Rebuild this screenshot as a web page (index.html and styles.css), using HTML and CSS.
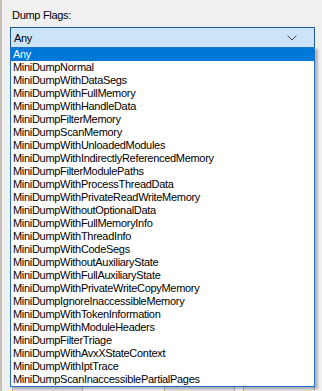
FILE: index.html
```html
<!DOCTYPE html>
<html>
<head>
<link rel="stylesheet" href="styles.css">
</head>
<body>

<div class="dialog">
  <div class="label">Dump Flags:</div>
  <div class="combo">
    <span class="combo-text">Any</span>
    <svg class="chevron" width="10" height="6" viewBox="0 0 10 6">
      <path d="M0.5 0.5 L5 5 L9.5 0.5" fill="none" stroke="#444" stroke-width="1"/>
    </svg>
  </div>

  <div class="hidden-area"></div>

  <div class="buttons">
    <div class="btn btn-reset">Reset</div>
    <div class="btn btn-ok">Ok</div>
    <div class="btn btn-cancel">Cancel</div>
  </div>

  <!-- open dropdown, drawn over the dialog -->
  <ul class="dropdown">
    <li class="selected">Any</li>
    <li>MiniDumpNormal</li>
    <li>MiniDumpWithDataSegs</li>
    <li>MiniDumpWithFullMemory</li>
    <li>MiniDumpWithHandleData</li>
    <li>MiniDumpFilterMemory</li>
    <li>MiniDumpScanMemory</li>
    <li>MiniDumpWithUnloadedModules</li>
    <li>MiniDumpWithIndirectlyReferencedMemory</li>
    <li>MiniDumpFilterModulePaths</li>
    <li>MiniDumpWithProcessThreadData</li>
    <li>MiniDumpWithPrivateReadWriteMemory</li>
    <li>MiniDumpWithoutOptionalData</li>
    <li>MiniDumpWithFullMemoryInfo</li>
    <li>MiniDumpWithThreadInfo</li>
    <li>MiniDumpWithCodeSegs</li>
    <li>MiniDumpWithoutAuxiliaryState</li>
    <li>MiniDumpWithFullAuxiliaryState</li>
    <li>MiniDumpWithPrivateWriteCopyMemory</li>
    <li>MiniDumpIgnoreInaccessibleMemory</li>
    <li>MiniDumpWithTokenInformation</li>
    <li>MiniDumpWithModuleHeaders</li>
    <li>MiniDumpFilterTriage</li>
    <li>MiniDumpWithAvxXStateContext</li>
    <li>MiniDumpWithIptTrace</li>
    <li>MiniDumpScanInaccessiblePartialPages</li>
  </ul>
</div>

</body>
</html>
```

FILE: styles.css
```css
body {
  margin: 0;
  background-color: #f0f0f0;
  font-family: "Liberation Sans", Arial, sans-serif;
  font-size: 11px;
  letter-spacing: -0.3px;
  color: #000;
  overflow: hidden;
}

.dialog {
  position: relative;
  height: 391px;
  padding: 0 7px 0 10px;
  border-left: 2px solid #c9c2bb;
  box-sizing: border-box;
}

.label {
  padding-top: 9px;
  height: 27px;
  box-sizing: border-box;
  line-height: 12px;
}

.combo {
  display: flex;
  align-items: center;
  justify-content: space-between;
  height: 21px;
  margin-left: -2px;
  border: 1px solid #1c5a9c;
  background-color: #cce4f7;
  padding: 0 17px 0 3px;
  box-sizing: border-box;
}

.hidden-area {
  height: 336px;
}

.buttons {
  display: flex;
  gap: 8px;
}

.btn {
  height: 22px;
  border: 1px solid #adadad;
  background-color: #e1e1e1;
  text-align: center;
  line-height: 20px;
  box-sizing: border-box;
}

.btn-reset {
  width: 71px;
}

.btn-ok {
  width: 71px;
  margin-left: auto;
}

.btn-cancel {
  width: 72px;
}

/* open list */
.dropdown {
  position: absolute;
  top: 47px;
  left: 8px;
  width: 305px;
  margin: 0;
  padding: 0;
  list-style: none;
  background-color: #fff;
  border: 1px solid #1f74c9;
  box-sizing: border-box;
  box-shadow: 3px 2px 2px rgba(0, 0, 0, 0.25);
}

.dropdown li {
  height: 13px;
  line-height: 13px;
  padding-left: 2px;
  white-space: nowrap;
}

.dropdown li.selected {
  background-color: #0078d7;
  color: #fff;
}
```
